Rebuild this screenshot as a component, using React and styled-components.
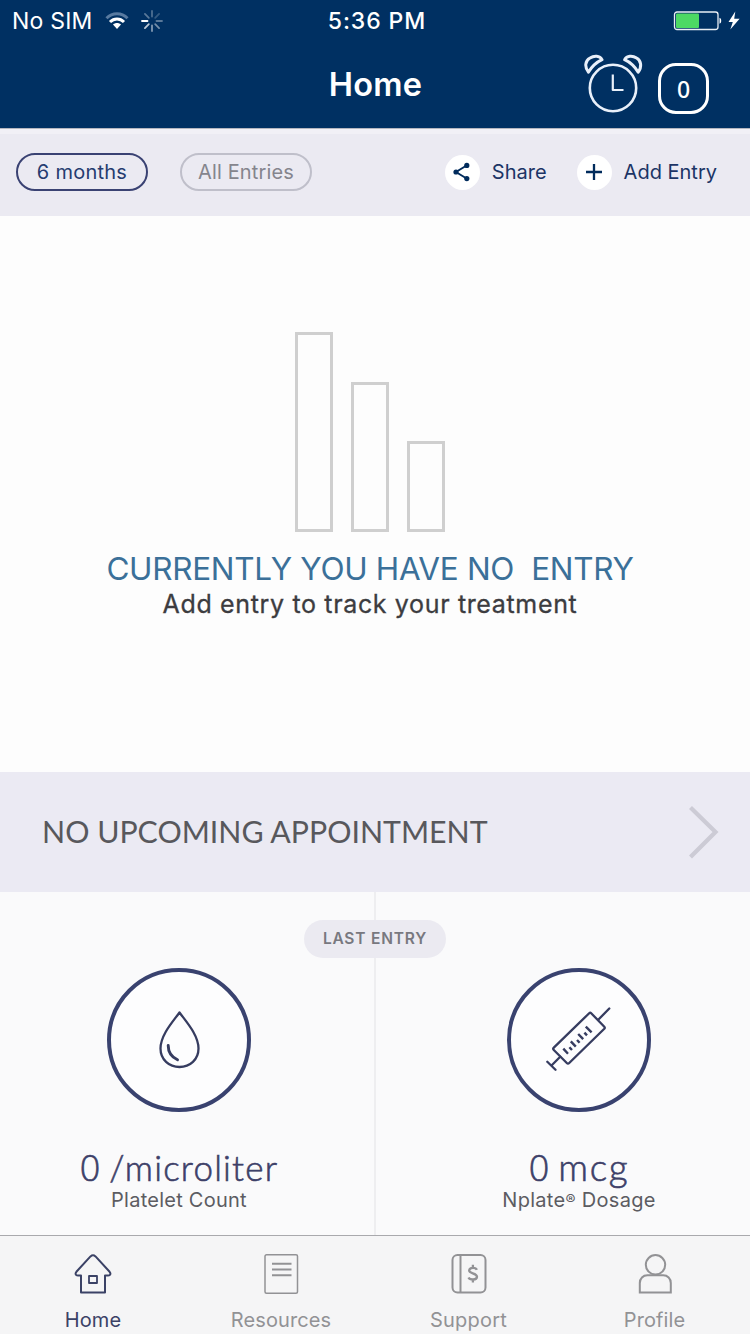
import React from "react";
import styled, { createGlobalStyle } from "styled-components";

const GlobalStyle = createGlobalStyle`
  * { box-sizing: border-box; }
  body { margin: 0; background: #fdfdfd; }
`;

const sans = `Inter, "Liberation Sans", sans-serif`;
const display = `Lato, "Liberation Sans", sans-serif`;

const Screen = styled.div`
  display: flex;
  flex-direction: column;
  width: 750px;
  height: 1334px;
  overflow: hidden;
  font-family: ${sans};
  background: #fdfdfd;
  white-space: pre;
`;

const Header = styled.header`
  height: 128px;
  background: #003062;
  color: #fff;
`;

const StatusBar = styled.div`
  display: grid;
  grid-template-columns: 1fr 100px 1fr;
  align-items: center;
  height: 41px;
  padding: 0 10px 0 12px;
`;

const Carrier = styled.div`
  display: flex;
  align-items: center;
  font-size: 23px;
  line-height: 28px;
  letter-spacing: 0.2px;
  svg { display: block; flex: none; }
`;

const CarrierName = styled.span`
  width: 93px;
  padding-top: 1px;
`;

const Clock = styled.div`
  padding: 1px 0 0 2px;
  font-size: 23px;
  font-weight: 500;
  line-height: 28px;
  letter-spacing: 0.9px;
  text-align: center;
  justify-self: center;
`;

const Power = styled.div`
  display: flex;
  justify-content: flex-end;
  svg { display: block; }
`;

const NavBar = styled.div`
  display: grid;
  grid-template-columns: 1fr 120px 1fr;
  height: 87px;
`;

const Title = styled.h1`
  grid-column: 2;
  margin: 0;
  padding-left: 1px;
  font-size: 32.5px;
  font-weight: 600;
  line-height: 88px;
  letter-spacing: 0.2px;
  text-align: center;
`;

const NavActions = styled.div`
  display: flex;
  justify-content: flex-end;
  padding: 10px 41px 0 0;
  svg { display: block; }
`;

const CountBadge = styled.div`
  width: 51px;
  height: 51px;
  margin: 12px 0 0 14px;
  border: 3px solid #fff;
  border-radius: 18px;
  font-size: 23px;
  font-weight: 500;
  font-family: "Noto Sans", sans-serif;
  line-height: 46px;
  text-align: center;
`;

const FilterBar = styled.div`
  display: flex;
  align-items: center;
  height: 88px;
  padding: 0 33px 1px 16px;
  border-top: 1px solid #b4b6bf;
  background: #ebeaf2;
  box-shadow: inset 0 5px 0 #f1f0f6;
`;

const Pill = styled.button`
  width: 132px;
  height: 38px;
  margin-right: 32px;
  padding: 0;
  border: 2px solid ${(p) => (p.$active ? "#3a4273" : "#bfbfca")};
  border-radius: 19px;
  background: transparent;
  color: ${(p) => (p.$active ? "#263c70" : "#85858d")};
  font: 400 20px/34px ${sans};
  letter-spacing: ${(p) => p.$spacing}px;
`;

const ToolbarAction = styled.button`
  display: flex;
  align-items: center;
  gap: 12px;
  margin-left: ${(p) => (p.$first ? "auto" : "30px")};
  padding: 0;
  border: 0;
  background: none;
  color: #1c3566;
  font: 400 20px/34px ${sans};
  letter-spacing: ${(p) => p.$spacing}px;
  svg { display: block; }
`;

const ActionDisc = styled.span`
  display: grid;
  place-items: center;
  width: 35px;
  height: 35px;
  border-radius: 50%;
  background: #fff;
`;

const EmptyState = styled.section`
  display: flex;
  flex-direction: column;
  align-items: center;
  height: 556px;
  padding: 116px 10px 0 0;
`;

const Bars = styled.div`
  display: flex;
  align-items: flex-end;
  gap: 18px;
  height: 200px;
`;

const Bar = styled.div`
  width: 38px;
  height: ${(p) => p.$height}px;
  border: 3px solid #cfcfcf;
`;

const EmptyTitle = styled.h2`
  margin: 17px 0 0;
  color: #3b7099;
  font-size: 31.5px;
  font-weight: 400;
  line-height: 40px;
  letter-spacing: -0.3px;
`;

const EmptyText = styled.p`
  margin: 0;
  color: #3c3c40;
  font-size: 25px;
  font-weight: 400;
  line-height: 31px;
  letter-spacing: 0.65px;
  -webkit-text-stroke: 0.3px currentColor;
`;

const Appointment = styled.section`
  display: flex;
  align-items: center;
  justify-content: space-between;
  height: 120px;
  padding: 0 30px 0 42px;
  background: #ebeaf3;
  svg { display: block; }
`;

const AppointmentText = styled.span`
  padding-bottom: 2px;
  color: #58585c;
  font-family: ${display};
  font-size: 30.3px;
  line-height: 40px;
`;

const LastEntry = styled.section`
  position: relative;
  display: grid;
  grid-template-columns: 376px 374px;
  height: 343px;
  background: #fafafb;
`;

const LastEntryTag = styled.span`
  position: absolute;
  top: 28px;
  left: 304px;
  width: 142px;
  height: 38px;
  border-radius: 19px;
  background: #ebeaf1;
  color: #78787f;
  font-size: 15.5px;
  font-weight: 600;
  line-height: 38px;
  letter-spacing: 0.8px;
  text-align: center;
`;

const Metric = styled.div`
  display: flex;
  flex-direction: column;
  align-items: center;
  padding-top: 76px;
  padding-left: ${(p) => (p.$right ? "32px" : "0")};
  padding-right: ${(p) => (p.$right ? "0" : "16px")};
  border-right: ${(p) => (p.$right ? "0" : "2px solid #eeeef0")};
`;

const MetricDisc = styled.div`
  display: grid;
  place-items: center;
  width: 144px;
  height: 144px;
  border: 4px solid #39426f;
  border-radius: 50%;
  background: #fdfdfe;
  svg { display: block; }
`;

const MetricValue = styled.div`
  display: flex;
  align-items: baseline;
  gap: ${(p) => p.$gap}px;
  margin-top: 33px;
  color: #3d4068;
  font-family: ${display};
  font-size: ${(p) => p.$size}px;
  font-weight: 300;
  line-height: 44px;
  letter-spacing: ${(p) => p.$spacing}px;
  -webkit-text-stroke: 0.6px currentColor;
`;

const Amount = styled.span`
  font-family: "Open Sans", sans-serif;
  font-size: 36px;
  font-weight: 300;
  letter-spacing: 0;
`;

const MetricLabel = styled.div`
  margin-top: -2px;
  color: #5c5c62;
  font-size: 20px;
  line-height: 24px;
  letter-spacing: ${(p) => p.$spacing}px;
`;

const Registered = styled.span`
  position: relative;
  top: -2px;
  font-size: 15px;
  line-height: 1;
`;

const TabBar = styled.nav`
  display: grid;
  grid-template-columns: 186px 190px 185px 187px;
  height: 99px;
  border-top: 1px solid #a9a9ad;
  background: #f5f5f6;
`;

const Tab = styled.a`
  display: flex;
  flex-direction: column;
  align-items: center;
  gap: 12px;
  padding-top: 16px;
  color: ${(p) => (p.$active ? "#3b4266" : "#929295")};
  font-size: 20px;
  line-height: 24px;
  letter-spacing: ${(p) => p.$spacing}px;
  svg { display: block; }
`;

const WifiIcon = () => (
  <svg width="24" height="18" viewBox="0 0 24 18" fill="none">
    <path d="M1.5 6.2C7.5.2 16.5.2 22.5 6.2" stroke="#587aa0" strokeWidth="3" />
    <path d="M5 10C9 6 15 6 19 10" stroke="#fff" strokeWidth="3" />
    <path d="M8 12.6C10.4 10.6 13.6 10.6 16 12.6L12 17Z" fill="#fff" />
  </svg>
);

const spokes = [0.3, 0.2, 0.35, 0.45, 0.5, 0.75, 1, 0.35];

const SpinnerIcon = () => (
  <svg width="22" height="22" viewBox="0 0 22 22" style={{ marginLeft: 12 }}>
    {spokes.map((opacity, i) => (
      <line key={i} x1="11" y1="1" x2="11" y2="6.5" stroke="#fff" strokeWidth="1.8"
        strokeLinecap="round" opacity={opacity} transform={`rotate(${i * 45} 11 11)`} />
    ))}
  </svg>
);

const BatteryIcon = () => (
  <svg width="68" height="20" viewBox="0 0 68 20">
    <rect x="2.5" y="1" width="43.5" height="17.5" rx="2.5" fill="none" stroke="#e8eef5" strokeWidth="1.3" />
    <rect x="4" y="2.5" width="23" height="14.5" rx="1" fill="#4cd964" />
    <path d="M47.5 6.7C49.8 7.3 49.8 12.1 47.5 12.7Z" fill="#fff" />
    <path d="M63.3 .5L56.5 10.9H60.8L58.3 18.5L67.6 7.7H62.2Z" fill="#fff" />
  </svg>
);

const AlarmIcon = () => (
  <svg width="60" height="64" viewBox="0 0 60 64" fill="none" stroke="#e9f0fa" strokeWidth="2.6" strokeLinejoin="round" strokeLinecap="round">
    <circle cx="29" cy="37" r="23.2" />
    <path d="M28.8 23.5V39H39.5" strokeWidth="2.2" strokeLinecap="butt" />
    <path d="M4.4 21.2C0.4 16 1 9.7 6 7C10.2 4.3 15.8 4.6 18 8.6C12 11.4 7.8 15.5 4.4 21.2Z" strokeWidth="3" />
    <path d="M54.2 21.2C58 16 57.4 9.7 52.6 7C48.4 4.3 42.8 4.6 40.6 8.6C46.8 11.4 50.8 15.5 54.2 21.2Z" strokeWidth="3" />
  </svg>
);

const ShareIcon = () => (
  <svg width="20" height="20" viewBox="0 0 20 20" fill="#002b5c">
    <path d="M15 3.2L4 10L15 16.8" fill="none" stroke="#002b5c" strokeWidth="1.9" />
    <circle cx="14.8" cy="3.4" r="2.6" />
    <circle cx="4" cy="10" r="2.6" />
    <circle cx="14.8" cy="16.6" r="2.6" />
  </svg>
);

const PlusIcon = () => (
  <svg width="20" height="20" viewBox="0 0 20 20" stroke="#002b5c" strokeWidth="2.3">
    <path d="M10 2V18M2 10H18" />
  </svg>
);

const ChevronIcon = () => (
  <svg width="32" height="56" viewBox="0 0 32 56" fill="none" stroke="#cccbd5" strokeWidth="4.2">
    <path d="M2.5 3.5L27.5 28L2.5 53" />
  </svg>
);

const DropIcon = () => (
  <svg width="44" height="60" viewBox="0 0 44 60" fill="none" stroke="#363c60" strokeWidth="2.3" strokeLinejoin="round" strokeLinecap="round">
    <path d="M22.5 2.5C16 11.5 3.5 25 3.5 38.5C3.5 49.5 12 57 22.5 57S41.5 49.5 41.5 38.5C41.5 25 29 11.5 22.5 2.5Z" />
    <path d="M11.2 35.5C11.2 42 14.5 47 20.5 49.8" strokeWidth="2.9" />
  </svg>
);

const SyringeIcon = () => (
  <svg width="70" height="70" viewBox="0 0 70 70" fill="none" stroke="#363c60" strokeWidth="2.3" strokeLinecap="round" strokeLinejoin="round">
    <path d="M45.2 8.2L9.8 42.6Q8.6 43.8 9.8 45L22.8 58Q24 59.2 25.2 58L60.3 23.8Q61.2 22.8 60.3 21.8L47.2 8.2Q46.2 7.2 45.2 8.2Z" />
    <path d="M54.5 14.5L65.3 3.5M16.2 51.7L8 60M3.3 56.8L11.5 64.8" />
    <path d="M19.3 43.6L24 48.8M25.4 42.2L28 45M26.8 36.4L31.8 41.6M33 35L35.6 37.8M34.2 29L39.2 34.2M40.4 27.6L43 30.4M41.8 21.6L47.6 27.4" strokeWidth="2.4" strokeLinecap="butt" />
  </svg>
);

const HomeIcon = () => (
  <svg width="42" height="44" viewBox="0 0 42 44" fill="none" stroke="currentColor" strokeWidth="2" strokeLinejoin="round">
    <path d="M9 23.5H5.8C3.4 23.5 3 21.5 4.4 19.8L18.5 4.4Q21 2.2 23.5 4.4L37.6 19.8C39 21.5 38.6 23.5 36.2 23.5H33V40.5H9Z" />
    <rect x="17" y="24" width="8" height="7" strokeWidth="1.8" />
  </svg>
);

const ResourcesIcon = () => (
  <svg width="42" height="44" viewBox="0 0 42 44" fill="none" stroke="currentColor" strokeWidth="1.5">
    <rect x="5" y="2.8" width="32.5" height="38.5" rx="1.5" />
    <path d="M12 11.7H31.5M12 17.4H31.5M12 23.2H31.5" strokeWidth="2" />
  </svg>
);

const SupportIcon = () => (
  <svg width="42" height="44" viewBox="0 0 42 44" fill="none" stroke="currentColor" strokeWidth="2">
    <rect x="4.5" y="3" width="33" height="37.5" rx="5" />
    <path d="M12.5 3V40.5" strokeWidth="2" />
    <path d="M28.8 17.8C27.8 15.2 21.6 15.2 21.2 18.4C20.8 22 29.2 20.6 29 24.9C28.8 28.4 21.8 28.2 20.5 25.4M24.9 12.8V15.8M24.9 27.6V30.4" strokeWidth="2.3" />
  </svg>
);

const ProfileIcon = () => (
  <svg width="42" height="44" viewBox="0 0 42 44" fill="none" stroke="currentColor" strokeWidth="2">
    <circle cx="21.5" cy="12.8" r="9.7" />
    <path d="M5.8 40.5V31C5.8 26.5 9 23.3 13.4 23.3H29.2C33.6 23.3 36.8 26.5 36.8 31V40.5Z" />
  </svg>
);

export default function App() {
  return (
    <Screen>
      <GlobalStyle />
      <Header>
        <StatusBar>
          <Carrier>
            <CarrierName>No SIM</CarrierName>
            <WifiIcon />
            <SpinnerIcon />
          </Carrier>
          <Clock>5:36 PM</Clock>
          <Power><BatteryIcon /></Power>
        </StatusBar>
        <NavBar>
          <Title>Home</Title>
          <NavActions>
            <AlarmIcon />
            <CountBadge>0</CountBadge>
          </NavActions>
        </NavBar>
      </Header>
      <FilterBar>
        <Pill $active $spacing={0.25}>6 months</Pill>
        <Pill $spacing={0.15}>All Entries</Pill>
        <ToolbarAction $first $spacing={0}>
          <ActionDisc><ShareIcon /></ActionDisc>Share
        </ToolbarAction>
        <ToolbarAction $spacing={0}>
          <ActionDisc><PlusIcon /></ActionDisc>Add Entry
        </ToolbarAction>
      </FilterBar>
      <EmptyState>
        <Bars>
          <Bar $height={200} />
          <Bar $height={150} />
          <Bar $height={91} />
        </Bars>
        <EmptyTitle>{"CURRENTLY YOU HAVE NO  ENTRY"}</EmptyTitle>
        <EmptyText>Add entry to track your treatment</EmptyText>
      </EmptyState>
      <Appointment>
        <AppointmentText>NO UPCOMING APPOINTMENT</AppointmentText>
        <ChevronIcon />
      </Appointment>
      <LastEntry>
        <Metric>
          <MetricDisc><DropIcon /></MetricDisc>
          <MetricValue $size={35} $gap={9} $spacing={1.2}><Amount>0</Amount>/microliter</MetricValue>
          <MetricLabel $spacing={0.25}>Platelet Count</MetricLabel>
        </Metric>
        <Metric $right>
          <MetricDisc><SyringeIcon /></MetricDisc>
          <MetricValue $size={37} $gap={9} $spacing={1.6}><Amount>0</Amount>mcg</MetricValue>
          <MetricLabel $spacing={0.3}>Nplate<Registered>®</Registered> Dosage</MetricLabel>
        </Metric>
        <LastEntryTag>LAST ENTRY</LastEntryTag>
      </LastEntry>
      <TabBar>
        <Tab $active $spacing={0.1}><HomeIcon />Home</Tab>
        <Tab $spacing={0.1}><ResourcesIcon />Resources</Tab>
        <Tab $spacing={0.2}><SupportIcon />Support</Tab>
        <Tab $spacing={0.1}><ProfileIcon />Profile</Tab>
      </TabBar>
    </Screen>
  );
}
